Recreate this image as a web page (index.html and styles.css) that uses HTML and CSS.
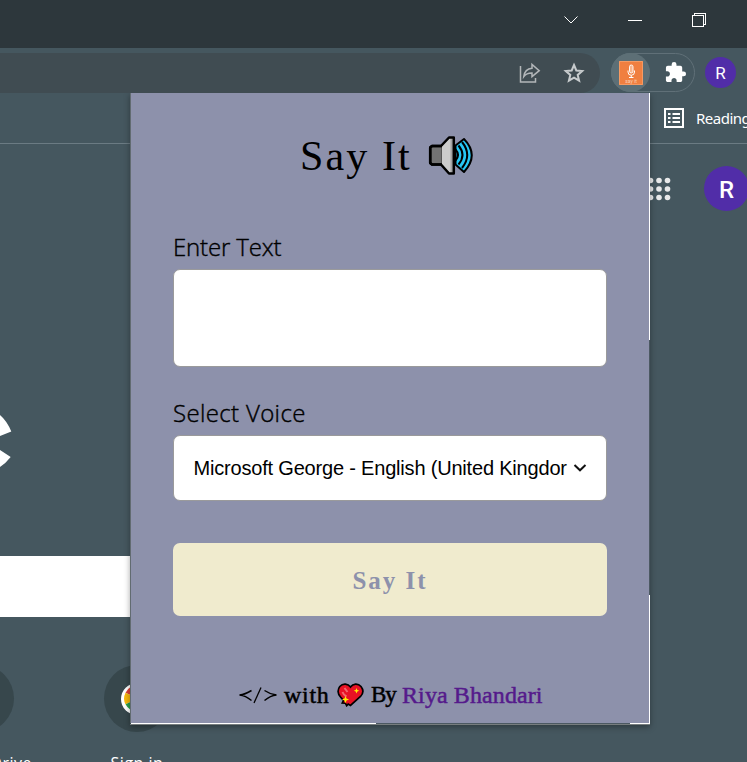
FILE: index.html
```html
<!DOCTYPE html>
<html lang="en">
<head>
<meta charset="utf-8">
<title>Say It</title>
<link rel="stylesheet" href="styles.css">
</head>
<body>
<div class="browser">
  <header class="titlebar">
    <svg class="window-controls" width="150" height="16" viewBox="0 0 150 16" fill="none" stroke="#fff" shape-rendering="crispEdges">
      <path d="M4.500 4.500l6.500 6.500 6.500-6.500" shape-rendering="auto" stroke-width="1"/>
      <path d="M68 8.500h14"/>
      <path d="M132.500 3.500h11v11h-11zM134.500 3.500v-2h11v11h-2"/>
    </svg>
  </header>
  <div class="toolbar">
    <div class="address">
      <svg width="24" height="24" viewBox="0 0 24 24" fill="none" stroke="#b2b6b9" stroke-width="1.500">
        <path d="M2.500 5v16h15v-4"/><path d="M5.800 15.500C6.500 10 9.500 7.500 14 7.200V3.500l7.200 6.200-7.200 6v-3.800c-3.500-.1-6.200 1-8.200 3.600z"/>
      </svg>
      <svg width="24" height="24" viewBox="0 0 24 24" fill="none" stroke="#c7cbcd" stroke-width="2">
        <path d="M12 4l2.300 5.500 5.900.5-4.500 3.900 1.400 5.800-5.100-3.100-5.100 3.100 1.400-5.800L3.800 10l5.900-.5z"/>
      </svg>
    </div>
    <div class="extensions">
      <span class="active-extension">
        <svg width="24" height="24" viewBox="0 0 24 24">
          <path fill="#f07f40" d="M0 0h24v24H0z"/>
          <path fill="none" stroke="#f69a62" d="M.5.5h23v23H.5z"/>
          <rect x="10.500" y="4" width="3.500" height="8" rx="1.700" fill="#f8b48c" stroke="#fff" stroke-width=".9"/>
          <path fill="none" stroke="#fff" d="M9 9.500v1.500a3.200 3.200 0 006.500 0V9.500M12.250 14.200v2.500M10 16.500h4.500"/>
          <text x="12" y="21.500" text-anchor="middle" font-size="5" fill="#fbd0b8" font-family="Roboto, sans-serif">say it</text>
        </svg>
      </span>
      <svg class="puzzle" width="24" height="24" viewBox="0 0 24 24"><path fill="#fff" d="M20.500 11H19V7c0-1.100-.9-2-2-2h-4V3.500a2.500 2.500 0 00-5 0V5H4c-1.100 0-1.990.9-1.990 2v3.800H3.500c1.490 0 2.700 1.210 2.700 2.700s-1.210 2.700-2.700 2.700H2V20c0 1.100.9 2 2 2h3.800v-1.500c0-1.490 1.210-2.700 2.700-2.700s2.700 1.210 2.700 2.700V22H17c1.100 0 2-.9 2-2v-4h1.500a2.500 2.500 0 000-5z"/></svg>
    </div>
    <span class="profile">R</span>
  </div>
  <nav class="bookmarks">
    <svg width="20" height="20" viewBox="0 0 20 20"><path fill="none" stroke="#fff" stroke-width="2" d="M1 1h18v18H1z"/><path stroke="#fff" stroke-width="2" d="M4 6h2.500M8.500 6H16M4 10h2.500M8.500 10H16M4 14h2.500M8.500 14H16"/></svg>
    <span>Reading</span>
  </nav>
  <main class="newtab">
    <div class="account">
      <svg width="24" height="24" viewBox="0 0 24 24" fill="#e8e9ea"><circle cx="3.500" cy="3.500" r="2.800"/><circle cx="12" cy="3.500" r="2.800"/><circle cx="20.500" cy="3.500" r="2.800"/><circle cx="3.500" cy="12" r="2.800"/><circle cx="12" cy="12" r="2.800"/><circle cx="20.500" cy="12" r="2.800"/><circle cx="3.500" cy="20.500" r="2.800"/><circle cx="12" cy="20.500" r="2.800"/><circle cx="20.500" cy="20.500" r="2.800"/></svg>
      <span class="avatar">R</span>
    </div>
    <svg class="logo" width="14" height="60" viewBox="0 0 14 60" fill="#fff"><path d="M0 5Q7 11 11.300 21.500L0 26zM0 40l10.700 7Q6 53 0 57z"/></svg>
    <div class="search"></div>
    <div class="shortcuts">
      <div class="shortcut"><span class="tile"></span><span>Google Drive</span></div>
      <div class="shortcut"><span class="tile">
        <svg width="34" height="34" viewBox="0 0 34 34"><circle cx="17" cy="17" r="16" fill="#fff"/><g fill="none" stroke-width="6"><path stroke="#dd4136" d="M8.200 12A10 10 0 0126 12"/><path stroke="#f5b70b" d="M8.200 12a10 10 0 000 9"/><path stroke="#2b9e4b" d="M8.200 21A10 10 0 0026 21"/></g></svg>
      </span><span>Sign in</span></div>
    </div>
  </main>
</div>

<section class="popup">
  <div class="panel">
    <h1><span class="name">Say It</span>
      <svg width="46" height="40" viewBox="0 0 46 40" stroke="#000" stroke-width="2.500" stroke-linejoin="round">
        <path fill="#27c7f5" stroke-width="2" d="M27.500 9.500L36 3Q51.500 19 36 36L27.500 28.500z"/>
        <path fill="none" stroke-width="2" d="M27.500 13.500q5 5.500 0 11M30.500 9.500q8 9.500 0 19M34 6q10.500 13 0 26"/>
        <path fill="#737373" d="M4 10h11v18.500H4L2.200 27V11.500z"/>
        <path fill="#ccc" stroke="none" d="M14 10L22 2h4v35h-4l-8-8.500z"/>
        <path fill="#a3a3a3" stroke="none" d="M22.500 2h3v35h-3z"/>
        <path fill="none" d="M2.200 11.500L4 10h9l8-8.500h4.800v36H21l-8-9H4l-1.800-1.500z"/>
      </svg>
    </h1>
    <label for="text" class="text-label">Enter Text</label>
    <textarea id="text"></textarea>
    <label for="voice" class="voice-label">Select Voice</label>
    <div class="select" id="voice">
      <span class="value">Microsoft George - English (United Kingdor</span>
      <svg width="14" height="10" viewBox="0 0 14 10" fill="none" stroke="#111" stroke-width="2"><path d="M1.500 2L7 7.300 12.500 2"/></svg>
    </div>
    <button type="button">Say It</button>
    <footer>
      <svg width="40" height="18" viewBox="0 0 40 18" fill="none" stroke="#000"><path d="M13.500 4.500Q7 8.500 1.500 9q6 .5 12 5.500M26.500 4.500q6 4 12 4.500-6 .5-12 5.500" stroke-width="1.500"/><path d="M16 17l7-15.500" stroke-width="1.300"/></svg>
      <span class="with">with</span>
      <svg class="heart" width="27" height="24" viewBox="0 0 27 24"><path fill="#e81224" stroke="#000" stroke-width="1.700" d="M13.500 4C16 .4 21 0 24 3.500c2.800 3.600 1.900 7.500-.5 10L13.500 22.500l-2.300-1.500-1.500 1.700-1.400-2.500-3-.2 1.200-2.500L3.500 14C.5 11 .4 6.500 2.800 3.500 6 0 11 .7 13.500 4z"/><path fill="none" stroke="#f2686e" stroke-width="2" d="M5.500 9q1 3 4 4.500M7.500 5l3 4"/><path fill="#fff100" d="M19.500 5l.8 2 2 .8-2 .8-.8 2-.8-2-2-.8 2-.8zM8.500 13l1 2.600 2.600 1-2.600 1-1 2.600-1-2.600-2.600-1 2.600-1z"/></svg>
      <span class="by">By</span>
      <a class="author">Riya Bhandari</a>
    </footer>
  </div>
  <div class="edge edge-right"></div>
  <div class="edge edge-bottom"></div>
</section>
</body>
</html>
```
FILE: styles.css
```css
* { box-sizing: border-box; }
body { margin: 0; background: #45575f; overflow: hidden; }
svg { display: block; flex: none; }

.browser { height: 762px; width: 747px; overflow: hidden; color: #fff; font-family: "Open Sans", sans-serif; }
.titlebar { height: 48px; background: #2d373c; padding: 12px 0 0 560px; }
.toolbar { height: 45px; padding-top: 5px; display: flex; background: #45575f; }
.address {
  width: 600px; height: 40px; background: #404c52; border-radius: 0 20px 20px 0;
  display: flex; align-items: center; justify-content: flex-end; gap: 20px; padding-right: 14px;
}
.extensions {
  width: 84px; height: 39px; margin-left: 11px; border: 1px solid #607078; border-radius: 20px;
  display: flex; align-items: center; gap: 14px;
}
.active-extension {
  width: 39px; height: 39px; margin-left: -1px; border-radius: 50%; background: #5d6f76;
  display: flex; align-items: center; justify-content: center; flex: none;
}
.puzzle { width: 23px; height: 23px; margin-top: -1px; }
.profile {
  width: 31px; height: 31px; margin: 4px 0 0 10px; border-radius: 50%; background: #512da8;
  font: 17px/32px Roboto, sans-serif; text-align: center;
}
.bookmarks {
  height: 51px; border-bottom: 1px solid #6b7b83; padding: 0 0 1px 664px;
  display: flex; align-items: center; gap: 12px; font: 15px/20px "Noto Sans", sans-serif; letter-spacing: -.5px; white-space: nowrap;
}
.account { display: flex; align-items: center; padding: 22px 0 0 647px; gap: 33px; }
.avatar {
  flex: none; width: 45px; height: 45px; border-radius: 50%; background: #512da8;
  font: 500 24px/49px Roboto, sans-serif; text-align: center;
}
.logo { margin-top: 199px; }
.search { width: 300px; height: 61px; margin-top: 86px; background: #fff; }
.shortcuts { display: flex; gap: 90px; margin: 48px 0 0 -52px; }
.shortcut { width: 66px; display: flex; flex-direction: column; align-items: center; font-size: 16px; font-weight: 500; letter-spacing: .5px; line-height: 20px; white-space: nowrap; }
.tile { width: 66px; height: 67px; margin-bottom: 21px; border-radius: 50%; background: #37474c; display: flex; align-items: center; justify-content: center; }

.popup {
  position: absolute; left: 130px; top: 93px; width: 520px; height: 632px;
  display: grid; grid-template: 630px 1px / 519px 1px;
  border-bottom: 1px solid #777d7e; box-shadow: 0 2px 6px rgba(0, 0, 0, .35);
  clip-path: inset(0 -10px -10px -10px);
}
.panel { background: #8d91ab; border-left: 1px solid #626b71; padding: 0 42px; color: #000; }
.edge-right { background: linear-gradient(#fff 247px, #4c5962 247px 502px, #fff 502px); }
.edge-bottom { grid-column: 1 / 3; margin-left: 1px; background: linear-gradient(90deg, #fff 245px, #4c5962 245px 499px, #fff 499px); }

h1 { margin: 0; height: 138px; padding: 43px 0 0 127px; display: flex; align-items: flex-start; font-weight: 400; }
.name { width: 128px; margin-top: -1px; font: 42px/42px "Liberation Serif", serif; letter-spacing: 2.1px; white-space: nowrap; }
label { display: block; height: 38px; font: 24px/31px "Open Sans", sans-serif; font-weight: 300; -webkit-text-stroke: .4px #000; white-space: nowrap; }
.text-label { letter-spacing: -.15px; }
textarea { display: block; width: 434px; height: 98px; margin: 0; border: 1px solid #9a9a9b; border-radius: 7px; background: #fff; resize: none; }
.voice-label { margin-top: 30px; letter-spacing: .35px; }
.select {
  width: 434px; height: 66px; border: 1px solid #9a9a9b; border-radius: 7px; background: #fff;
  display: flex; align-items: center; padding-left: 19.5px; gap: 5px;
}
.value { width: 374px; overflow: hidden; white-space: nowrap; font: 20px/26px "Liberation Sans", sans-serif; letter-spacing: -.19px; }
button {
  display: block; width: 434px; height: 73px; margin: 42px 0 0; padding: 2px 0 0; border: 0; border-radius: 7px;
  background: #f0ebce; color: #8d91ab; font: bold 25px "Liberation Serif", serif; letter-spacing: 2px;
}
footer { height: 36px; margin-top: 61px; padding-left: 65px; display: flex; align-items: center; font: 24px/36px "Liberation Serif", serif; -webkit-text-stroke: .5px; white-space: nowrap; }
.with { width: 45px; margin-left: 6px; letter-spacing: .7px; }
.heart { margin-left: 8px; }
.by { width: 24px; margin-left: 7px; font-size: 23px; letter-spacing: -1px; }
.author { margin-left: 7px; color: #551a8b; letter-spacing: .1px; }
```
